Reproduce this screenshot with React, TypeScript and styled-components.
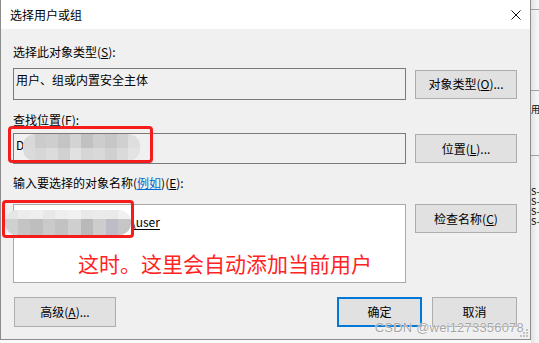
import React from 'react';
import styled, { createGlobalStyle } from 'styled-components';

const GlobalStyle = createGlobalStyle`
  html, body {
    margin: 0;
    padding: 0;
    background: #fbfbfb;
  }
  body {
    font-family: "Noto Sans CJK SC", "Noto Sans", sans-serif;
    font-size: 12px;
    color: #000;
  }
`;

const Screen = styled.div`
  position: relative;
  width: 539px;
  height: 343px;
  display: flex;
  overflow: hidden;
  background: #fbfbfb;
`;

const Dialog = styled.div`
  position: relative;
  width: 531px;
  height: 340px;
  flex: none;
  box-sizing: border-box;
  border: 1px solid #8c8c8c;
  border-top: none;
  display: flex;
  flex-direction: column;
  background: #f0f0f0;
`;

const TitleBar = styled.div`
  height: 29px;
  flex: none;
  display: flex;
  align-items: center;
  justify-content: space-between;
  padding: 0 9px;
  background: #fff;
`;

const Title = styled.span`
  font-size: 12px;
  line-height: 16px;
`;

const CloseGlyph = styled.svg`
  width: 10px;
  height: 10px;
  display: block;
`;

const Body = styled.div`
  flex: 1;
  display: flex;
  flex-direction: column;
  padding: 15px 13px 0 12px;
`;

const Label = styled.div<{ $gap: number }>`
  margin-top: ${(p) => p.$gap}px;
  height: 16px;
  line-height: 16px;
  white-space: nowrap;
`;

const Key = styled.span`
  text-decoration: underline;
  text-underline-offset: 1px;
`;

const HelpLink = styled.span`
  color: #0066cc;
  text-decoration: underline;
  text-underline-offset: 1px;
`;

const Row = styled.div<{ $gap: number; $align?: string }>`
  margin-top: ${(p) => p.$gap}px;
  display: grid;
  grid-template-columns: 393px 102px;
  column-gap: 9px;
  align-items: ${(p) => p.$align || 'center'};
`;

const TextBox = styled.div<{ $h: number; $editable?: boolean }>`
  position: relative;
  box-sizing: border-box;
  height: ${(p) => p.$h}px;
  padding: 3px 2px;
  line-height: 16px;
  white-space: nowrap;
  border: 1px solid ${(p) => (p.$editable ? '#a9a9a9' : '#7a7a7a')};
  background: ${(p) => (p.$editable ? '#fff' : '#f0f0f0')};
`;

const NameLine = styled.div`
  margin-top: 6px;
  padding-left: 115px;
  line-height: 16px;
  text-decoration: underline;
  text-underline-offset: 2px;
`;

const Note = styled.div`
  margin-top: 20px;
  padding-left: 62px;
  font-size: 21px;
  line-height: 26px;
  color: #ff2323;
`;

const Button = styled.button<{ $w: number; $h?: number; $primary?: boolean }>`
  box-sizing: border-box;
  width: ${(p) => p.$w}px;
  height: ${(p) => p.$h || 29}px;
  padding: 0;
  margin: 0;
  font-family: inherit;
  font-size: 12px;
  line-height: 16px;
  color: #000;
  background: #e1e1e1;
  border: ${(p) => (p.$primary ? '2px solid #0078d7' : '1px solid #adadad')};
  white-space: nowrap;
`;

const Footer = styled.div`
  margin-top: 14px;
  display: flex;
  justify-content: space-between;
  padding-left: 1px;
`;

const ButtonGroup = styled.div`
  display: flex;
  gap: 10px;
`;

const Redaction = styled.div<{ $left: number; $top: number; $w: number; $h: number; $cols: number; $rows: string }>`
  position: absolute;
  left: ${(p) => p.$left}px;
  top: ${(p) => p.$top}px;
  width: ${(p) => p.$w}px;
  height: ${(p) => p.$h}px;
  display: grid;
  grid-template-columns: repeat(${(p) => p.$cols}, 1fr);
  grid-template-rows: ${(p) => p.$rows};
  border-radius: 12px;
  overflow: hidden;
  filter: blur(0.6px);
`;

const Cell = styled.span<{ $c: string }>`
  background: ${(p) => p.$c};
`;

const RedBox = styled.div<{ $left: number; $top: number; $w: number; $h: number }>`
  position: absolute;
  left: ${(p) => p.$left}px;
  top: ${(p) => p.$top}px;
  width: ${(p) => p.$w}px;
  height: ${(p) => p.$h}px;
  box-sizing: border-box;
  border: 3px solid #f51c1c;
  border-radius: 4px;
  pointer-events: none;
`;

const Watermark = styled.div`
  position: absolute;
  right: 15px;
  top: 321px;
  font-family: "Liberation Sans", Arial, sans-serif;
  font-size: 13px;
  line-height: 14px;
  letter-spacing: 0.2px;
  color: rgba(140, 140, 140, 0.8);
  text-shadow: 0 0 1px #fff, 0 0 1px #fff;
  white-space: nowrap;
`;

const SizeGrip = styled.svg`
  position: absolute;
  right: 2px;
  bottom: 2px;
  width: 8px;
  height: 8px;
`;

const Strip = styled.div`
  flex: 1;
  display: flex;
  flex-direction: column;
  overflow: hidden;
  background: linear-gradient(to right, #e2e2e2, #f3f3f3 70%);
`;

const StripRule = styled.div<{ $gap: number }>`
  margin-top: ${(p) => p.$gap}px;
  height: 1px;
  flex: none;
  background: #a0a0a0;
`;

const StripText = styled.div<{ $gap: number }>`
  margin-top: ${(p) => p.$gap}px;
  height: 10px;
  font-size: 9px;
  line-height: 10px;
  white-space: nowrap;
`;

const mosaicA = [
  '#d9d9d9', '#cbcbcb', '#cecece', '#c4c4c4', '#d3d3d3', '#c1c1c1', '#cdcdcd', '#c7c7c7', '#d0d0d0', '#dedede',
  '#dadada', '#d6d6d6', '#dcdcdc', '#d1d1d1', '#e1e1e1', '#d6d6d6', '#d9d9d9', '#d0d0d0', '#dadada', '#e3e3e3',
];

const mosaicB = [
  '#e6e6e6', '#ececec', '#efefef', '#e8e8e8', '#eeeeee', '#f1f1f1', '#e9e9e9', '#ebebeb', '#eaeaea', '#f0f0f0',
  '#d0d0d0', '#c4c4c4', '#bebebe', '#cacaca', '#c2c2c2', '#cfcfcf', '#b9b9b9', '#cdcdcd', '#c0bcc6', '#c6c6c6',
];

const grip = [
  [6, 0],
  [3, 3], [6, 3],
  [0, 6], [3, 6], [6, 6],
];

const App: React.FC = () => {
  return (
    <>
      <GlobalStyle />
      <Screen>
        <Dialog>
          <TitleBar>
            <Title>选择用户或组</Title>
            <CloseGlyph viewBox="0 0 10 10">
              <path d="M0.5 0.5 L9.5 9.5 M9.5 0.5 L0.5 9.5" stroke="#111" strokeWidth="1" fill="none" />
            </CloseGlyph>
          </TitleBar>

          <Body>
            <Label $gap={0}>
              选择此对象类型(<Key>S</Key>):
            </Label>
            <Row $gap={8}>
              <TextBox $h={32}>用户、组或内置安全主体</TextBox>
              <Button $w={102}>
                对象类型(<Key>O</Key>)...
              </Button>
            </Row>

            <Label $gap={12}>
              查找位置(<Key>F</Key>):
            </Label>
            <Row $gap={5}>
              <TextBox $h={31}>
                D
                <Redaction $left={9} $top={0} $w={117} $h={27} $cols={10} $rows="1fr 1fr">
                  {mosaicA.map((c, i) => (
                    <Cell key={i} $c={c} />
                  ))}
                </Redaction>
              </TextBox>
              <Button $w={102}>
                位置(<Key>L</Key>)...
              </Button>
            </Row>

            <Label $gap={11}>
              输入要选择的对象名称(<HelpLink>例如</HelpLink>)(<Key>E</Key>):
            </Label>
            <Row $gap={13} $align="start">
              <TextBox $h={79} $editable>
                <NameLine>\user</NameLine>
                <Note>这时。这里会自动添加当前用户</Note>
                <Redaction $left={-9} $top={5} $w={126} $h={25} $cols={10} $rows="9px 1fr">
                  {mosaicB.map((c, i) => (
                    <Cell key={i} $c={c} />
                  ))}
                </Redaction>
              </TextBox>
              <Button $w={102}>
                检查名称(<Key>C</Key>)
              </Button>
            </Row>

            <Footer>
              <Button $w={102} $h={30}>
                高级(<Key>A</Key>)...
              </Button>
              <ButtonGroup>
                <Button $w={85} $h={30} $primary>
                  确定
                </Button>
                <Button $w={85} $h={30}>
                  取消
                </Button>
              </ButtonGroup>
            </Footer>
          </Body>

          <SizeGrip viewBox="0 0 8 8">
            {grip.map(([x, y], i) => (
              <rect key={i} x={x} y={y} width="2" height="2" fill="#c2c2c2" />
            ))}
          </SizeGrip>
        </Dialog>

        <Strip>
          <StripRule $gap={9} />
          <StripRule $gap={80} />
          <StripText $gap={14}>用</StripText>
          <StripRule $gap={40} />
          <StripText $gap={31}>S-</StripText>
          <StripText $gap={0}>S-</StripText>
          <StripText $gap={0}>S-</StripText>
          <StripText $gap={0}>S-</StripText>
        </Strip>

        <RedBox $left={8} $top={126} $w={145} $h={37} />
        <RedBox $left={2} $top={200} $w={132} $h={38} />
        <Watermark>CSDN @wei1273356078</Watermark>
      </Screen>
    </>
  );
};

export default App;
